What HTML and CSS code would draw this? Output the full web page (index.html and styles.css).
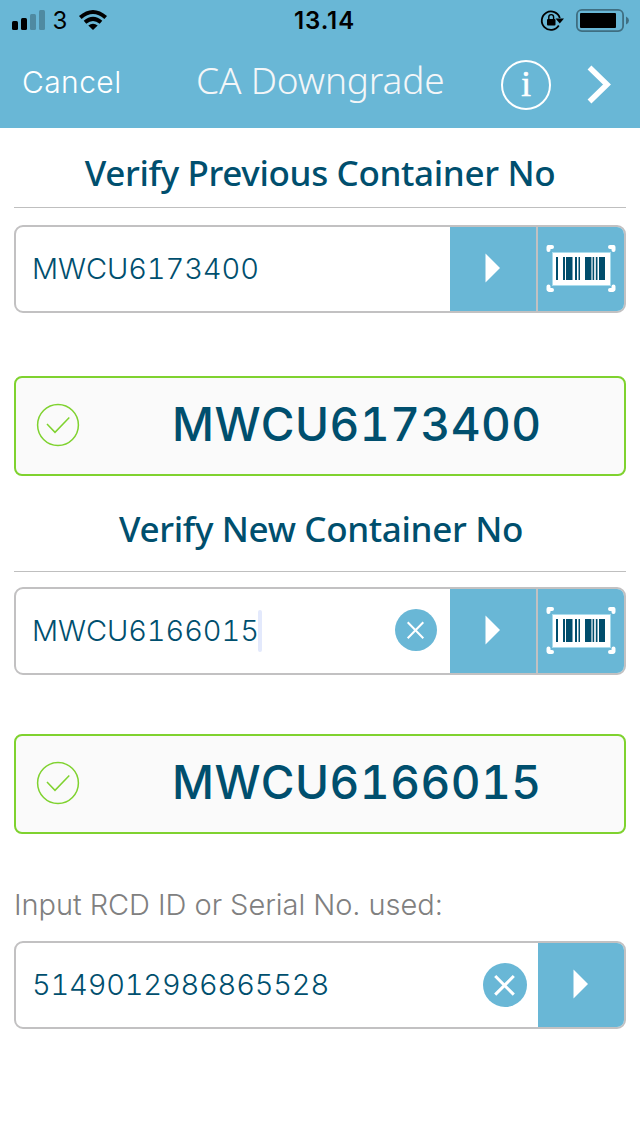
FILE: index.html
```html
<!DOCTYPE html>
<html lang="en">
<head>
<meta charset="utf-8">
<title>CA Downgrade</title>
<link rel="stylesheet" href="styles.css">
</head>
<body>
<svg class="defs" aria-hidden="true">
  <symbol id="play" viewBox="0 0 16 30"><path d="M0.5 0.5L15 15L0.5 29.5Z" fill="#fff"/></symbol>
  <symbol id="barcode" viewBox="0 0 86 84">
    <rect x="14.5" y="25.5" width="58" height="33" fill="#fff" stroke="#a9dced" stroke-width="1"/>
    <path d="M18 30h2v23h-2zM25 30h2v23h-2zM28 30h6.5v23H28zM37 30h2v23h-2zM40.500 30h1.500v23h-1.500zM47 30h6.500v23H47zM54.500 30h1.500v23h-1.500zM58 30h1.500v23H58zM61 30h6v23h-6z" fill="#004d6c"/>
    <path d="M54 30v23M57 30v23" stroke="#a8c1cd" stroke-width="1"/>
    <g fill="none" stroke="#fff" stroke-width="4" stroke-linecap="round" stroke-linejoin="round">
      <path d="M10.500 20V23M11 20H14M75.500 20V23M75 20H72M10.500 59.500V62.500M11 63H14M75.500 59.500V62.500M75 63H72"/>
    </g>
  </symbol>
  <symbol id="check" viewBox="0 0 44 44"><g fill="none" stroke="#7fd22f" stroke-width="1.500"><circle cx="22" cy="22" r="20.400"/><path d="M11 21L19 29.300L33.300 14.500"/></g></symbol>
</svg>
<div class="screen">
  <header class="header">
    <div class="status">
      <svg class="status-left" width="120" height="40" viewBox="0 0 120 40">
        <rect x="12" y="21" width="6" height="9" rx="1.500"/><rect x="21" y="18" width="6" height="12" rx="1.500"/>
        <g fill="#4f8aa1"><rect x="30" y="14" width="6" height="16" rx="1.500"/><rect x="39" y="10" width="6" height="20" rx="1.500"/></g>
        <text class="carrier" x="52.500" y="29">3</text>
        <g fill="none" stroke="#000" stroke-width="4"><path d="M80.300 17.500Q93 6.500 105.700 17.500"/><path d="M85 22.200Q93 15.500 101 22.200"/></g>
        <path d="M88.300 25.500Q93 21.800 97.700 25.500L93 30Z"/>
      </svg>
      <span class="time">13.14</span>
      <svg class="status-right" width="110" height="40" viewBox="530 0 110 40">
        <path d="M558.800 25.500A9.200 9.200 0 1 1 559.800 18" fill="none" stroke="#000" stroke-width="1.800"/>
        <path d="M555.500 18.500H564L559.800 23.500Z"/>
        <rect x="547" y="19" width="8.500" height="6.500" rx="1"/><path d="M548.800 19.500V17a2.400 2.400 0 0 1 4.800 0V19.500" fill="none" stroke="#000" stroke-width="1.400"/>
        <rect x="576.900" y="9.900" width="46.200" height="21.200" rx="5" fill="none" stroke="#3f6e81" stroke-width="1.800"/>
        <rect x="580" y="13" width="36" height="15" rx="1"/>
        <path d="M626 16.500Q629 18 629 20.500T626 24.500Z" fill="#3f6e81"/>
      </svg>
    </div>
    <nav class="nav">
      <a class="cancel">Cancel</a>
      <h1 class="title">CA Downgrade</h1>
      <span class="info">i</span>
      <svg class="next" width="26" height="42" viewBox="0 0 26 42"><path d="M3.500 3.500L21 20.500L3.500 37.500" fill="none" stroke="#fff" stroke-width="5.500"/></svg>
    </nav>
  </header>
  <main class="main">
    <h2 class="heading">Verify Previous Container No</h2>
    <div class="field">
      <span class="value">MWCU6173400</span>
      <button class="btn"><svg class="play" width="16" height="30"><use href="#play"/></svg></button>
      <button class="btn scan"><svg width="86" height="84"><use href="#barcode"/></svg></button>
    </div>
    <div class="result"><svg class="ok" width="44" height="44"><use href="#check"/></svg><strong class="number">MWCU6173400</strong></div>
    <h2 class="heading second">Verify New Container No</h2>
    <div class="field">
      <span class="value new">MWCU6166015</span><i class="caret"></i>
      <svg class="clear" width="42" height="42" viewBox="0 0 42 42"><circle cx="21" cy="21" r="21" fill="#69b7d6"/><path d="M12.700 13.200L28.300 29.300M28.300 13.200L12.700 29.300" stroke="#fff" stroke-width="2"/></svg>
      <button class="btn"><svg class="play" width="16" height="30"><use href="#play"/></svg></button>
      <button class="btn scan"><svg width="86" height="84"><use href="#barcode"/></svg></button>
    </div>
    <div class="result last"><svg class="ok" width="44" height="44"><use href="#check"/></svg><strong class="number">MWCU6166015</strong></div>
    <p class="label">Input RCD ID or Serial No. used:</p>
    <div class="field">
      <span class="value serial">5149012986865528</span>
      <svg class="clear serial-clear" width="44" height="44" viewBox="0 0 44 44"><circle cx="22" cy="22" r="22" fill="#69b7d6"/><path d="M12.200 13L30.800 31.600M30.800 13L12.200 31.600" stroke="#fff" stroke-width="3"/></svg>
      <button class="btn"><svg class="play" width="16" height="30"><use href="#play"/></svg></button>
    </div>
  </main>
</div>
</body>
</html>
```
FILE: styles.css
```css
* { box-sizing: border-box; }
body { margin: 0; background: #fff; font-family: Inter, "Liberation Sans", sans-serif; }
.defs { display: none; }
.screen { width: 640px; height: 1136px; overflow: hidden; }
.header { height: 128px; background: #69b7d6; }
.status { height: 40px; display: grid; grid-template-columns: 120px 1fr 110px; align-items: center; }
.carrier { font: 400 24px Inter, sans-serif; }
.time { padding: 2px 0 0 174px; font-size: 24px; font-weight: 600; letter-spacing: 0.9px; line-height: 38px; white-space: nowrap; }
.nav { height: 88px; display: flex; color: #fff; padding-left: 22px; white-space: nowrap; }
.cancel { width: 174px; padding-top: 22px; font-size: 30px; line-height: 40px; font-weight: 300; letter-spacing: 0.4px; }
.title { width: 305px; margin: 0; padding-top: 16px; font: 300 37px/48px "Noto Sans", "Open Sans", sans-serif; letter-spacing: -0.15px; color: #f4f6f8; }
.info { width: 50px; height: 50px; margin-top: 20px; border: 2px solid #fff; border-radius: 50%; text-align: center; font: 500 35px/46px "Liberation Serif", serif; -webkit-text-stroke: 0.6px #fff; }
.next { margin: 24px 0 0 35px; }
.main { padding: 0 14px; }
.heading { margin: 0 0 17px; height: 80px; padding-top: 21px; border-bottom: 1px solid #bfbfbf; text-align: center; color: #004f6e; font: 500 35px/48px "Noto Sans", "Open Sans", sans-serif; letter-spacing: -0.35px; white-space: nowrap; }
.second { height: 96px; margin-bottom: 15px; padding: 29px 0 0 2px; }
.field { height: 88px; border: 2px solid #c2c1c2; border-radius: 9px; display: flex; align-items: center; overflow: hidden; background: #fff; }
.value { padding-left: 16px; font-size: 29px; line-height: 40px; font-weight: 300; color: #004f6e; font-variant-numeric: tabular-nums; letter-spacing: -0.1px; white-space: nowrap; margin-right: auto; }
.value.new { width: 242px; margin-right: 0; }
.value.serial { letter-spacing: -0.2px; }
.caret { width: 4px; height: 42px; border-radius: 2px; background: #e3e9fc; margin-right: auto; }
.btn { width: 86px; height: 84px; flex: none; border: 0; padding: 0; background: #69b7d6; display: flex; align-items: center; justify-content: center; }
.play { margin-bottom: 2px; }
.scan { width: 88px; border-left: 2px solid #c2c1c2; }
.clear { margin: 0 13px 2px 0; flex: none; }
.serial-clear { margin: 0 11px 0 0; }
.result { height: 100px; margin-top: 63px; border: 2px solid #7fd22f; border-radius: 8px; background: #fafafa; display: flex; align-items: center; }
.result.last { margin-top: 59px; }
.ok { margin: 0 0 2px 20px; }
.number { margin-left: 92px; padding-bottom: 4px; font-size: 46px; line-height: 60px; font-weight: 550; color: #004f6e; font-variant-numeric: tabular-nums; letter-spacing: 0.5px; white-space: nowrap; }
.label { margin: 51px 0 16px; height: 40px; font-size: 29px; line-height: 40px; font-weight: 300; letter-spacing: -0.05px; color: #808080; white-space: nowrap; }
```
